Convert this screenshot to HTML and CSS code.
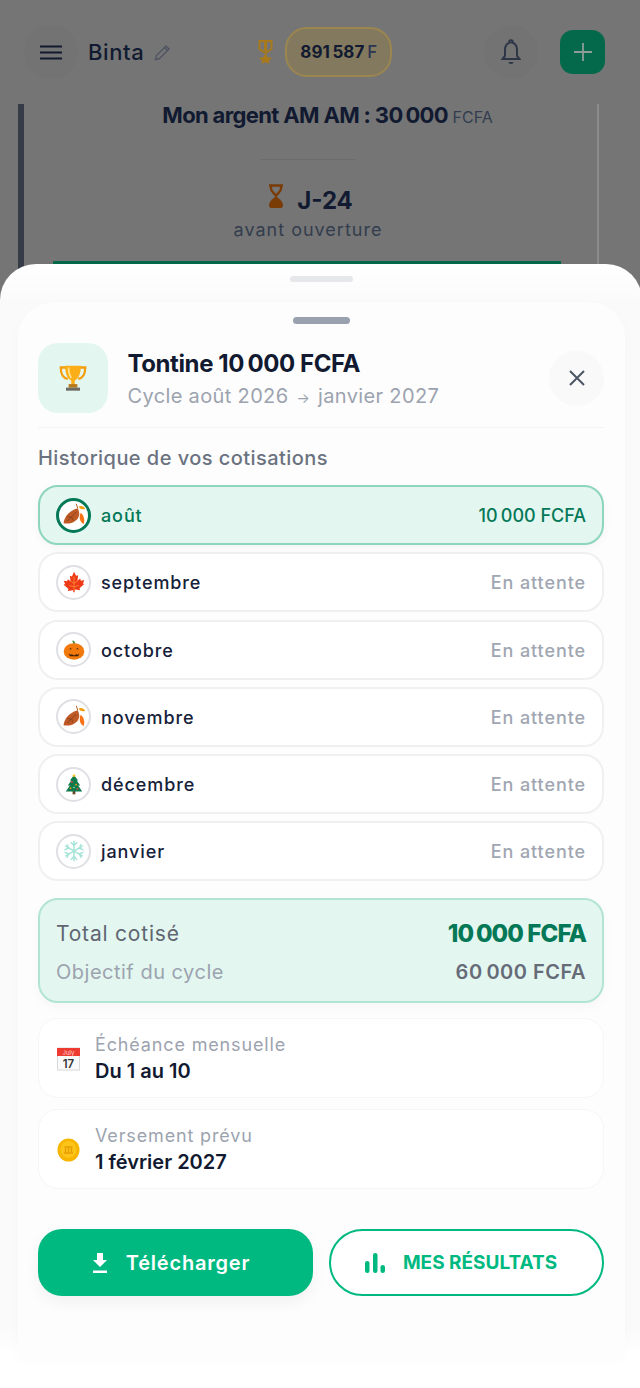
FILE: index.html
```html
<!DOCTYPE html>
<html lang="fr">
<head>
    <meta charset="utf-8">
    <title>Tontine</title>
    <link rel="stylesheet" href="styles.css">
</head>
<body>
<svg class="sprite" width="0" height="0">
    <symbol id="leaf" viewBox="0 0 32 32">
        <path d="M21 7C12 9 3 17 2 27c10 2 20-3 21-12 0-3-1-6-2-8z" fill="#bf5a27"/>
        <path d="M19 12 7 24M13 18l1 5M12 19l-5-1" stroke="#7d3a18" stroke-width="1" fill="none"/>
        <path d="M21 7l-2-6" stroke="#a4511f" stroke-width="1.200"/>
        <path d="M22 5c3-2 7-1 9 3-4 1-7 0-9-3z" fill="#f59e0b"/>
        <path d="M25 13c3 2 6 8 4 15-5-2-7-9-4-15z" fill="#f97316"/>
    </symbol>
    <symbol id="maple" viewBox="0 0 32 32">
        <path d="M16 1l3 6 3-1-1 8 4-3 1 3 5-1-2 5 2 1-7 6 1 3-7-1-1 .5V31h-2v-2.500l-1-.5-7 1 1-3-7-6 2-1-2-5 5 1 1-3 4 3-1-8 3 1z" fill="#ee3a17"/>
        <path d="M16 8v20M16 18l-6-4M16 18l6-4M16 23l-7-2M16 23l7-2" stroke="#fb923c" stroke-width="1.100"/>
    </symbol>
    <symbol id="pumpkin" viewBox="0 0 32 32">
        <path d="M15 8c0-2 0-4-2-5l2-1c2 1 3 3 3 6z" fill="#3f8f3a"/>
        <ellipse cx="16" cy="18" rx="15" ry="12" fill="#f27a0d"/>
        <path d="M9 15l2-2 2 2zM19 15l2-2 2 2z" fill="#40210a"/>
        <path d="M8 21l3 2 2-1 3 2 3-2 2 1 3-2-2 4H10z" fill="#40210a"/>
    </symbol>
    <symbol id="tree" viewBox="0 0 32 32">
        <rect x="14" y="26" width="4" height="5" fill="#6b4423"/>
        <path d="M16 3l6 8h-2l5 7h-3l6 9H4l6-9H7l5-7h-2z" fill="#0f7a4c"/>
        <path d="M16 1l1 2h2l-2 1 1 2-2-1-2 1 1-2-2-1h2z" fill="#f9c513"/>
        <circle cx="13" cy="13" r="1.300" fill="#ef4444"/>
        <circle cx="19" cy="17" r="1.300" fill="#f59e0b"/>
        <circle cx="11" cy="22" r="1.300" fill="#f59e0b"/>
        <circle cx="21" cy="23" r="1.300" fill="#ef4444"/>
        <circle cx="16" cy="21" r="1.100" fill="#a7f3d0"/>
    </symbol>
    <symbol id="flake" viewBox="0 0 32 32">
        <g stroke="#a6e3d8" stroke-width="2.200" fill="none" stroke-linecap="round">
            <path d="M16 2v28M4 9l24 14M28 9 4 23"/>
            <path d="M12 4l4 4 4-4M12 28l4-4 4 4M3 14l5-2-2-5M29 18l-5 2 2 5M29 14l-5-2 2-5M3 18l5 2-2 5"/>
        </g>
    </symbol>
</svg>

<div class="screen">
    <!-- Page behind the sheet -->
    <header class="topbar">
        <div class="round-btn menu-btn">
            <svg width="22" height="15" viewBox="0 0 22 15"><path d="M0 1.500h22M0 7.500h22M0 13.500h22" stroke="#111a30" stroke-width="2.200"/></svg>
        </div>
        <span class="user-name">Binta</span>
        <svg class="pencil" width="17" height="17" viewBox="0 0 17 17"><path d="M1.500 15.500l1-4L12 2l3 3-9.500 9.500zM10.500 3.500l3 3" fill="none" stroke="#4f5462" stroke-width="1.400"/></svg>
        <svg class="medal" width="15" height="24" viewBox="0 0 15 24"><path d="M1.500 1h12v8l-6 4-6-4z" fill="none" stroke="#a87a1c" stroke-width="2"/><path d="M6 1h3v10H6z" fill="#a87a1c"/><path d="M7.500 13l2.200 4.300 4.300.6-3.200 2.800.8 3.300-4.100-2-4.100 2 .8-3.300L1 17.900l4.300-.6z" fill="#a87a1c"/></svg>
        <div class="balance"><b>891&#8239;587</b> <span>F</span></div>
        <div class="round-btn bell-btn">
            <svg width="20" height="26" viewBox="0 0 20 26"><path d="M10 1.500a1 1 0 0 1 1.200 2C14.500 4.500 16 7.500 16 11v6l2.500 3h-17L4 17v-6c0-3.500 1.500-6.500 4.800-7.500A1 1 0 0 1 10 1.500z" fill="none" stroke="#2e3648" stroke-width="2"/><path d="M7.500 23a2.500 2 0 0 0 5 0z" fill="#2e3648"/></svg>
        </div>
        <div class="plus-btn">
            <svg width="20" height="20" viewBox="0 0 20 20"><path d="M10 1v18M1 10h18" stroke="#8d9c96" stroke-width="1.800"/></svg>
        </div>
    </header>
    <section class="behind-card">
        <p class="money">Mon argent AM AM : <b>30&#8239;000</b> <span>FCFA</span></p>
        <div class="behind-divider"></div>
        <div class="countdown">
            <svg width="16" height="25" viewBox="0 0 16 25"><path d="M1 1.500h14M3 2v3c0 3 5 5 5 7.500C8 10 13 8 13 5V2" fill="none" stroke="#7a3c06" stroke-width="2.400"/><path d="M8 12c-2 2-7 5-7 9 0 2 1 3 2 3h10c1 0 2-1 2-3 0-4-5-7-7-9z" fill="#7a3c06"/></svg>
            <strong>J-24</strong>
        </div>
        <p class="countdown-sub">avant ouverture</p>
        <div class="behind-green"></div>
    </section>

    <!-- Bottom sheet -->
    <div class="sheet">
        <div class="sheet-handle"></div>
        <div class="panel">
            <div class="panel-handle"></div>
            <div class="panel-head">
                <div class="trophy-box">
                    <svg width="28" height="28" viewBox="0 0 32 32">
                        <path d="M8 4H2c0 7 2 12 8 13M24 4h6c0 7-2 12-8 13" fill="none" stroke="#f59e0b" stroke-width="2.600"/>
                        <path d="M7 2h18c0 10-3 15-7 17v5h-4v-5C10 17 7 12 7 2z" fill="#fbae17"/>
                        <path d="M11 4c0 5 1 9 3 12" stroke="#ffe08a" stroke-width="2" fill="none"/>
                        <rect x="11" y="23" width="10" height="4" fill="#b8791a"/>
                        <rect x="8" y="27" width="16" height="3.500" fill="#6e6a64"/>
                    </svg>
                </div>
                <div class="head-text">
                    <h1>Tontine 10&#8239;000 FCFA</h1>
                    <p>Cycle août 2026 <small>→</small> janvier 2027</p>
                </div>
                <button class="close-btn" type="button">
                    <svg width="16" height="16" viewBox="0 0 16 16"><path d="M1 1l14 14M15 1 1 15" stroke="#4b5563" stroke-width="2"/></svg>
                </button>
            </div>

            <h2 class="section-title">Historique de vos cotisations</h2>

            <div class="months">
                <div class="month active">
                    <span class="month-icon"><svg width="24" height="24"><use href="#leaf"/></svg></span>
                    <span class="month-name">août</span>
                    <span class="month-value">10&#8239;000 FCFA</span>
                </div>
                <div class="month">
                    <span class="month-icon"><svg width="22" height="22"><use href="#maple"/></svg></span>
                    <span class="month-name">septembre</span>
                    <span class="month-value">En attente</span>
                </div>
                <div class="month">
                    <span class="month-icon"><svg width="22" height="22"><use href="#pumpkin"/></svg></span>
                    <span class="month-name">octobre</span>
                    <span class="month-value">En attente</span>
                </div>
                <div class="month">
                    <span class="month-icon"><svg width="24" height="24"><use href="#leaf"/></svg></span>
                    <span class="month-name">novembre</span>
                    <span class="month-value">En attente</span>
                </div>
                <div class="month">
                    <span class="month-icon"><svg width="22" height="22"><use href="#tree"/></svg></span>
                    <span class="month-name">décembre</span>
                    <span class="month-value">En attente</span>
                </div>
                <div class="month">
                    <span class="month-icon"><svg width="22" height="22"><use href="#flake"/></svg></span>
                    <span class="month-name">janvier</span>
                    <span class="month-value">En attente</span>
                </div>
            </div>

            <div class="totals">
                <div class="totals-row">
                    <span class="total-label">Total cotisé</span>
                    <span class="total-value">10&#8239;000 FCFA</span>
                </div>
                <div class="totals-row">
                    <span class="goal-label">Objectif du cycle</span>
                    <span class="goal-value">60&#8239;000 FCFA</span>
                </div>
            </div>

            <div class="info-card">
                <svg width="23" height="24" viewBox="0 0 23 24">
                    <rect x="0.500" y="1" width="22" height="22" fill="#fafafa" stroke="#d9d9d9"/>
                    <rect x="0" y="1" width="23" height="8" fill="#ee3b32"/>
                    <text x="11.500" y="7.500" font-size="6" fill="#ffd5d0" text-anchor="middle" font-family="Inter, sans-serif">July</text>
                    <text x="11.500" y="20.500" font-size="11.500" font-weight="600" fill="#333" text-anchor="middle" font-family="Inter, sans-serif">17</text>
                </svg>
                <div>
                    <p class="info-label">Échéance mensuelle</p>
                    <p class="info-value">Du 1 au 10</p>
                </div>
            </div>
            <div class="info-card second">
                <svg width="23" height="24" viewBox="0 0 23 24">
                    <ellipse cx="11.500" cy="12" rx="11" ry="11.500" fill="#f7b500"/>
                    <ellipse cx="11.500" cy="11.500" rx="8" ry="8.500" fill="#fcc419"/>
                    <path d="M7 15h9M7.500 9h8M8.500 10v4M11.500 10v4M14.500 10v4" stroke="#e59a00" stroke-width="1.300"/>
                </svg>
                <div>
                    <p class="info-label">Versement prévu</p>
                    <p class="info-value">1 février 2027</p>
                </div>
            </div>

            <div class="actions">
                <button class="btn-primary" type="button">
                    <svg width="16" height="20" viewBox="0 0 16 20"><path d="M5 0h6v7h4l-7 7-7-7h4zM1 17.500h14V20H1z" fill="#fff"/></svg>
                    Télécharger
                </button>
                <button class="btn-outline" type="button">
                    <svg width="20" height="20" viewBox="0 0 20 20"><rect x="0" y="8" width="4.500" height="12" rx="2.200"/><rect x="8" y="0" width="4.500" height="20" rx="2.200"/><rect x="15.500" y="12" width="4.500" height="8" rx="2.200"/></svg>
                    MES RÉSULTATS
                </button>
            </div>
        </div>
    </div>
</div>
</body>
</html>
```

FILE: styles.css
```css
* {
    box-sizing: border-box;
}
html, body {
    margin: 0;
    padding: 0;
}
body {
    font-family: Inter, "Open Sans", sans-serif;
    background-color: #757575;
    color: #111827;
}
p, h1, h2 {
    margin: 0;
}
.sprite {
    position: absolute;
}
.screen {
    position: relative;
    width: 640px;
    height: 1388px;
    overflow: hidden;
    background-color: #757575;
}

/* header behind the sheet */
.topbar {
    height: 104px;
    padding: 0 34px 0 24px;
    display: flex;
    align-items: center;
}
.round-btn {
    width: 54px;
    height: 54px;
    border-radius: 50%;
    background-color: #737373;
    display: flex;
    align-items: center;
    justify-content: center;
}
.user-name {
    margin-left: 10px;
    font-size: 22px;
    font-weight: 500;
    letter-spacing: 0.6px;
    color: #111a30;
}
.pencil {
    margin-left: 10px;
}
.medal {
    margin-left: 87px;
}
.balance {
    margin-left: 12px;
    width: 107px;
    height: 50px;
    border: 2px solid #9c8650;
    border-radius: 22px;
    background-color: #83795f;
    display: flex;
    align-items: center;
    justify-content: center;
    gap: 3px;
    color: #111a30;
    font-size: 17px;
}
.balance b {
    font-weight: 700;
}
.balance span {
    color: #2b3550;
    font-weight: 500;
}
.bell-btn {
    margin-left: 92px;
}
.plus-btn {
    margin-left: 22px;
    width: 45px;
    height: 44px;
    border-radius: 13px;
    background-color: #04694a;
    display: flex;
    align-items: center;
    justify-content: center;
}

.behind-card {
    margin-left: 18px;
    width: 581px;
    height: 170px;
    padding-right: 5px;
    border-left: 6px solid #353b47;
    border-right: 2px solid #8b8b8b;
    text-align: center;
}
.money {
    padding-left: 39px;
    line-height: 22px;
    font-size: 22px;
    font-weight: 700;
    letter-spacing: -0.65px;
    color: #111a30;
}
.money b {
    font-weight: 700;
}
.money span {
    font-size: 16px;
    font-weight: 400;
    letter-spacing: 0;
    color: #333d4e;
}
.behind-divider {
    width: 94px;
    height: 1px;
    margin: 31px auto 0;
    background-color: #6b6b6b;
}
.countdown {
    margin: 23px 0 0 5px;
    display: flex;
    justify-content: center;
    align-items: center;
    gap: 13px;
    height: 26px;
}
.countdown strong {
    margin-top: 8px;
    font-size: 24px;
    font-weight: 700;
    color: #111a30;
}
.countdown-sub {
    margin-top: 10px;
    font-size: 18px;
    letter-spacing: 1px;
    color: #333d4e;
}
.behind-green {
    height: 4px;
    margin: 21px 31px 0 29px;
    background-color: #04694a;
}

/* sheet */
.sheet {
    position: absolute;
    top: 264px;
    left: 0;
    width: 642px;
    bottom: 0;
    padding: 12px 17px 32px 18px;
    background: linear-gradient(#fff, #fafafa 40px, #fafafa 1060px, #fff 1090px);
    border-radius: 36px 36px 0 0;
}
.sheet-handle {
    width: 63px;
    height: 6px;
    margin: 0 auto 20px;
    border-radius: 3px;
    background-color: #e5e7eb;
}
.panel {
    height: 1054px;
    padding: 15px 21px 0 20px;
    background-color: #fdfdfd;
    border-radius: 36px 36px 6px 6px;
    box-shadow: 0 4px 16px rgba(0, 0, 0, 0.02);
}
.panel-handle {
    width: 57px;
    height: 7px;
    margin: 0 auto 19px;
    border-radius: 4px;
    background-color: #9aa1ae;
}
.panel-head {
    display: flex;
    align-items: center;
    padding-bottom: 14px;
    border-bottom: 1px solid #f3f4f6;
}
.trophy-box {
    width: 70px;
    height: 70px;
    border-radius: 20px;
    background-color: #e3f7f0;
    display: flex;
    align-items: center;
    justify-content: center;
    flex-shrink: 0;
}
.head-text {
    margin-left: 19.500px;
    padding-top: 4px;
    flex: 1;
}
.head-text h1 {
    font-size: 24px;
    font-weight: 700;
    line-height: 32px;
    letter-spacing: -0.4px;
    color: #111a30;
    white-space: nowrap;
}
.head-text p {
    margin-top: 2px;
    font-size: 20px;
    line-height: 28px;
    letter-spacing: 0.35px;
    color: #9ca3af;
    white-space: nowrap;
}
.head-text small {
    margin: 0 2px;
    font-size: 14px;
}
.close-btn {
    width: 55px;
    height: 55px;
    border: 0;
    padding: 0;
    border-radius: 50%;
    background-color: #f9f9f9;
    display: flex;
    align-items: center;
    justify-content: center;
}
.section-title {
    margin: 17px 0 14px;
    font-size: 20px;
    font-weight: 500;
    line-height: 26px;
    letter-spacing: 0.45px;
    color: #6b7280;
}

.months {
    display: flex;
    flex-direction: column;
    gap: 7.300px;
}
.month {
    height: 60px;
    padding: 1px 16px 0 16px;
    display: flex;
    align-items: center;
    background-color: #fff;
    border: 2px solid #f0f0f2;
    border-radius: 20px;
}
.month-icon {
    width: 35px;
    height: 35px;
    margin-top: -1px;
    border-radius: 50%;
    border: 2px solid #dfe0e4;
    background-color: #fff;
    display: flex;
    align-items: center;
    justify-content: center;
    flex-shrink: 0;
}
.month-name {
    margin-left: 10px;
    flex: 1;
    font-size: 18px;
    font-weight: 500;
    letter-spacing: 0.9px;
    color: #16213a;
}
.month-value {
    font-size: 18px;
    font-weight: 500;
    letter-spacing: 0.9px;
    color: #a0a6b2;
}
.month.active {
    background-color: #e3f7f0;
    border-color: #8dd5bb;
    box-shadow: 0 3px 10px rgba(0, 0, 0, 0.04);
}
.month.active .month-icon {
    border: 3px solid #047857;
}
.month.active .month-name {
    color: #047857;
}
.month.active .month-value {
    color: #047857;
    letter-spacing: 0;
}

.totals {
    margin-top: 17px;
    height: 105px;
    padding: 17px 16px 0;
    background-color: #e3f7f0;
    border: 2px solid #b2e4d2;
    border-radius: 20px;
    box-shadow: 0 4px 12px rgba(0, 0, 0, 0.03);
}
.totals-row {
    display: flex;
    justify-content: space-between;
    align-items: center;
    height: 32px;
}
.totals-row + .totals-row {
    margin-top: 7px;
}
.total-label {
    font-size: 21px;
    letter-spacing: 0.8px;
    color: #5f6672;
}
.total-value {
    font-size: 24px;
    font-weight: 800;
    letter-spacing: -0.9px;
    color: #047857;
}
.goal-label {
    font-size: 20px;
    letter-spacing: 0.5px;
    color: #9ca3af;
}
.goal-value {
    font-size: 20px;
    font-weight: 600;
    letter-spacing: 0.5px;
    color: #666b78;
}

.info-card {
    margin-top: 15px;
    height: 80px;
    padding: 1px 17px 0 18px;
    display: flex;
    align-items: center;
    gap: 15px;
    background-color: #fff;
    border: 1px solid #f6f6f7;
    border-radius: 20px;
}
.info-card.second {
    margin-top: 11px;
}
.info-label {
    font-size: 18px;
    line-height: 24px;
    letter-spacing: 0.85px;
    color: #9ca3af;
}
.info-value {
    margin-top: 1px;
    font-size: 20px;
    font-weight: 600;
    line-height: 26px;
    color: #111a30;
}

.actions {
    margin-top: 40px;
    display: grid;
    grid-template-columns: 1fr 1fr;
    gap: 16px;
}
.actions button {
    height: 67px;
    display: flex;
    align-items: center;
    justify-content: center;
    gap: 18px;
    font-family: inherit;
    white-space: nowrap;
}
.btn-primary {
    padding: 0 9px 0 0;
    border: 0;
    border-radius: 24px;
    background-color: #00b981;
    color: #fff;
    font-size: 20px;
    font-weight: 600;
    letter-spacing: 0.8px;
    box-shadow: 0 6px 16px rgba(0, 0, 0, 0.05);
}
.btn-outline {
    padding: 0 11px 0 0;
    border: 2.500px solid #00b981;
    border-radius: 34px;
    background-color: #fff;
    color: #00b981;
    font-size: 19px;
    font-weight: 700;
}
.btn-outline svg {
    fill: #00b981;
}
```
